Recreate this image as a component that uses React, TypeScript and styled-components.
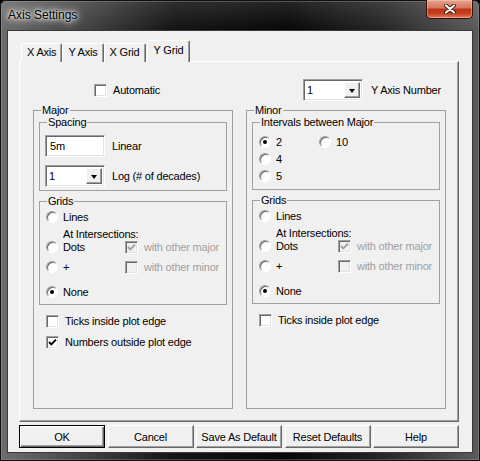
import { FC, ReactNode } from 'react';
import styled, { createGlobalStyle } from 'styled-components';

const GlobalStyle = createGlobalStyle`
  html, body {
    margin: 0;
    padding: 0;
    background: #000;
  }

  body {
    font-family: 'Liberation Sans', Arial, sans-serif;
    font-size: 11px;
    letter-spacing: -0.2px;
    color: #000;
  }
`;

const Window = styled.div`
  width: 480px;
  height: 461px;
  box-sizing: border-box;
  display: flex;
  flex-direction: column;
  padding: 0 7px 8px;
  border-radius: 6px 6px 0 0;
  background:
    linear-gradient(to bottom, rgba(255, 255, 255, 0.12), rgba(0, 0, 0, 0) 30px),
    linear-gradient(to right, #6d6d6d 0%, #474747 16%, #141414 36%, #080808 60%, #262626 80%, #5c5c5c 100%);
  box-shadow: inset 0 0 0 1px #111, inset 0 0 0 2px rgba(160, 160, 160, 0.35);
`;

const TitleBar = styled.div`
  height: 30px;
  display: flex;
  align-items: flex-start;
  flex-shrink: 0;
`;

const Title = styled.span`
  margin: 8px 0 0 1px;
  font-size: 12px;
  line-height: 14px;
  letter-spacing: 0;
  color: #000;
  text-shadow: 0 0 6px #fff, 0 0 10px rgba(255, 255, 255, 0.9), 0 0 3px #fff;
`;

const CloseButton = styled.div`
  margin-left: auto;
  width: 47px;
  height: 19px;
  box-sizing: border-box;
  display: flex;
  align-items: center;
  justify-content: center;
  border: 1px solid #3b0d06;
  border-top: none;
  border-radius: 0 0 5px 5px;
  background: linear-gradient(to bottom, #e7a590 0%, #d7785f 42%, #bf3519 52%, #c5401f 75%, #df8060 100%);
  box-shadow: inset 0 0 0 1px rgba(255, 210, 190, 0.45);
`;

const Client = styled.div`
  flex: 1;
  display: flex;
  flex-direction: column;
  padding: 10px 0 0 11px;
  background: #f0f0f0;
  border: 1px solid #3a3a3a;
`;

const TabStrip = styled.div`
  display: flex;
  align-items: flex-end;
  height: 21px;
  padding-left: 2px;
  margin-bottom: -1px;
  position: relative;
  z-index: 1;
`;

const Tab = styled.div<{ $active?: boolean }>`
  box-sizing: border-box;
  height: ${(p) => (p.$active ? '22px' : '19px')};
  padding: ${(p) => (p.$active ? '2px 6px 0' : '1px 5px 0')};
  margin-left: ${(p) => (p.$active ? '1px' : '0')};
  line-height: 15px;
  background: #f0f0f0;
  border-top: 1px solid #fff;
  border-left: 1px solid #fff;
  border-right: 1px solid #696969;
  border-radius: 2px 2px 0 0;
  box-shadow: inset -1px 0 0 #a0a0a0;
`;

const Panel = styled.div`
  width: 440px;
  height: 361px;
  box-sizing: border-box;
  display: flex;
  flex-direction: column;
  padding-bottom: 12px;
  background: #f0f0f0;
  border: 1px solid;
  border-color: #fff #696969 #696969 #fff;
  box-shadow: inset -1px -1px 0 #a0a0a0;
`;

const Columns = styled.div`
  display: grid;
  grid-template-columns: 200px 200px;
  column-gap: 13px;
  padding-left: 13px;
`;

const TopRow = styled(Columns)`
  margin-top: 17px;
  height: 22px;
  align-items: center;
`;

const TopCell = styled.div<{ $indent: number }>`
  display: flex;
  align-items: center;
  gap: 8px;
  padding-left: ${(p) => p.$indent}px;
`;

const Groups = styled(Columns)`
  margin-top: 9px;
  flex: 1;
`;

const Group = styled.div<{ $inset?: boolean }>`
  display: flex;
  flex-direction: column;
  border: 1px solid #a0a0a0;
  margin: ${(p) => (p.$inset ? '0 5px' : '0')};
`;

const GroupTitle = styled.span`
  align-self: flex-start;
  margin: -7px 0 0 7px;
  padding: 0 1px;
  line-height: 13px;
  background: #f0f0f0;
`;

const SpacingBody = styled.div`
  display: flex;
  flex-direction: column;
  gap: 8px;
  padding: 6px 0 3px 5px;
`;

const FieldRow = styled.div`
  display: flex;
  align-items: center;
  gap: 7px;
`;

const sunken = `
  box-sizing: border-box;
  background: #fff;
  border: 1px solid;
  border-color: #a0a0a0 #fff #fff #a0a0a0;
  box-shadow: inset 1px 1px 0 #696969, inset -1px -1px 0 #e3e3e3;
`;

const TextBox = styled.div`
  ${sunken}
  width: 60px;
  height: 22px;
  padding-left: 4px;
  line-height: 20px;
`;

const Select = styled.div`
  ${sunken}
  width: 60px;
  height: 22px;
  display: flex;
  padding: 2px;
`;

const SelectValue = styled.span`
  flex: 1;
  padding-left: 1px;
  line-height: 16px;
`;

const SelectArrow = styled.div`
  width: 16px;
  box-sizing: border-box;
  display: flex;
  align-items: center;
  justify-content: center;
  background: #f0f0f0;
  border: 1px solid;
  border-color: #fff #696969 #696969 #fff;
  box-shadow: inset -1px -1px 0 #a0a0a0;

  &::after {
    content: '';
    border-left: 3.5px solid transparent;
    border-right: 3.5px solid transparent;
    border-top: 4px solid #000;
    margin-top: 1px;
  }
`;

const OptionsBody = styled.div`
  display: flex;
  flex-direction: column;
  padding: 0 0 6px 6px;
`;

const OptionRow = styled.div<{ $h: number; $top?: number }>`
  display: grid;
  grid-template-columns: 79px auto;
  align-items: center;
  height: ${(p) => p.$h}px;
  margin-top: ${(p) => p.$top ?? 0}px;
`;

const SubLabel = styled.div`
  margin-top: 3px;
  padding-left: 17px;
  line-height: 11px;
`;

const IntervalsBody = styled.div`
  display: grid;
  grid-template-columns: 60px auto;
  grid-auto-rows: 14px;
  row-gap: 3px;
  align-items: center;
  padding: 6px 0 6px 6px;
`;

const GroupFooter = styled.div`
  display: flex;
  flex-direction: column;
  gap: 7px;
  padding: 9px 0 0 12px;
`;

const Label = styled.label<{ $disabled?: boolean }>`
  display: flex;
  align-items: center;
  gap: 6px;
  height: 14px;
  white-space: nowrap;
  color: ${(p) => (p.$disabled ? '#a0a0a0' : '#000')};
`;

const RadioLabel = styled(Label)`
  gap: 5px;
`;

const Box = styled.span<{ $disabled?: boolean }>`
  ${sunken}
  width: 13px;
  height: 13px;
  flex-shrink: 0;
  display: flex;
  align-items: center;
  justify-content: center;
  background: ${(p) => (p.$disabled ? '#f0f0f0' : '#fff')};
`;

const Circle = styled.span`
  ${sunken}
  width: 12px;
  height: 12px;
  flex-shrink: 0;
  border-radius: 50%;
  display: flex;
  align-items: center;
  justify-content: center;
  box-shadow: inset 1px 1px 0 #696969;
`;

const Dot = styled.span`
  width: 4px;
  height: 4px;
  border-radius: 50%;
  background: #000;
`;

const ButtonRow = styled.div`
  width: 440px;
  display: grid;
  grid-template-columns: repeat(5, 1fr);
  column-gap: 2.5px;
  margin-top: 3px;
`;

const Button = styled.div<{ $default?: boolean }>`
  height: 23px;
  box-sizing: border-box;
  display: flex;
  align-items: center;
  justify-content: center;
  background: #f0f0f0;
  border: 1px solid;
  border-color: ${(p) => (p.$default ? '#000' : '#fff #696969 #696969 #fff')};
  box-shadow: ${(p) =>
    p.$default
      ? 'inset 1px 1px 0 #fff, inset -1px -1px 0 #696969, inset -2px -2px 0 #a0a0a0'
      : 'inset -1px -1px 0 #a0a0a0'};
`;

type CheckProps = { checked?: boolean; disabled?: boolean; children: ReactNode };

const Check: FC<CheckProps> = ({ checked, disabled, children }) => (
  <Label $disabled={disabled}>
    <Box $disabled={disabled}>
      {checked && (
        <svg width='9' height='9' viewBox='0 0 9 9'>
          <path d='M1 4 L3.3 6.4 L8 1.6' fill='none' stroke={disabled ? '#a0a0a0' : '#000'} strokeWidth='1.9' />
        </svg>
      )}
    </Box>
    {children}
  </Label>
);

const Radio: FC<{ checked?: boolean; children: ReactNode }> = ({ checked, children }) => (
  <RadioLabel>
    <Circle>{checked && <Dot />}</Circle>
    {children}
  </RadioLabel>
);

const Dropdown: FC<{ value: string }> = ({ value }) => (
  <Select>
    <SelectValue>{value}</SelectValue>
    <SelectArrow />
  </Select>
);

const GridsGroup: FC = () => (
  <Group $inset style={{ marginTop: 10 }}>
    <GroupTitle>Grids</GroupTitle>
    <OptionsBody>
      <OptionRow $h={18}>
        <Radio>Lines</Radio>
      </OptionRow>
      <SubLabel>At Intersections:</SubLabel>
      <OptionRow $h={13}>
        <Radio>Dots</Radio>
        <Check checked disabled>
          with other major
        </Check>
      </OptionRow>
      <OptionRow $h={13} $top={7}>
        <Radio>+</Radio>
        <Check disabled>with other minor</Check>
      </OptionRow>
      <OptionRow $h={13} $top={12}>
        <Radio checked>None</Radio>
      </OptionRow>
    </OptionsBody>
  </Group>
);

const App: FC = () => (
  <>
    <GlobalStyle />
    <Window>
      <TitleBar>
        <Title>Axis Settings</Title>
        <CloseButton>
          <svg width='12' height='10' viewBox='0 0 12 10'>
            <path d='M2 1.5 L10 8.5 M10 1.5 L2 8.5' stroke='#3a1a14' strokeWidth='4' strokeLinecap='round' />
            <path d='M2 1.5 L10 8.5 M10 1.5 L2 8.5' stroke='#fff' strokeWidth='2.2' strokeLinecap='round' />
          </svg>
        </CloseButton>
      </TitleBar>
      <Client>
        <TabStrip>
          <Tab>X Axis</Tab>
          <Tab>Y Axis</Tab>
          <Tab>X Grid</Tab>
          <Tab $active>Y Grid</Tab>
        </TabStrip>
        <Panel>
          <TopRow>
            <TopCell $indent={61}>
              <Check>Automatic</Check>
            </TopCell>
            <TopCell $indent={57}>
              <Dropdown value='1' />
              Y Axis Number
            </TopCell>
          </TopRow>
          <Groups>
            <Group>
              <GroupTitle>Major</GroupTitle>
              <Group $inset style={{ marginTop: 5 }}>
                <GroupTitle>Spacing</GroupTitle>
                <SpacingBody>
                  <FieldRow>
                    <TextBox>5m</TextBox>
                    Linear
                  </FieldRow>
                  <FieldRow>
                    <Dropdown value='1' />
                    Log (# of decades)
                  </FieldRow>
                </SpacingBody>
              </Group>
              <GridsGroup />
              <GroupFooter>
                <Check>Ticks inside plot edge</Check>
                <Check checked>Numbers outside plot edge</Check>
              </GroupFooter>
            </Group>
            <Group>
              <GroupTitle>Minor</GroupTitle>
              <Group $inset style={{ marginTop: 5 }}>
                <GroupTitle>Intervals between Major</GroupTitle>
                <IntervalsBody>
                  <Radio checked>2</Radio>
                  <Radio>10</Radio>
                  <Radio>4</Radio>
                  <span />
                  <Radio>5</Radio>
                </IntervalsBody>
              </Group>
              <GridsGroup />
              <GroupFooter>
                <Check>Ticks inside plot edge</Check>
              </GroupFooter>
            </Group>
          </Groups>
        </Panel>
        <ButtonRow>
          <Button $default>OK</Button>
          <Button>Cancel</Button>
          <Button>Save As Default</Button>
          <Button>Reset Defaults</Button>
          <Button>Help</Button>
        </ButtonRow>
      </Client>
    </Window>
  </>
);

export default App;
